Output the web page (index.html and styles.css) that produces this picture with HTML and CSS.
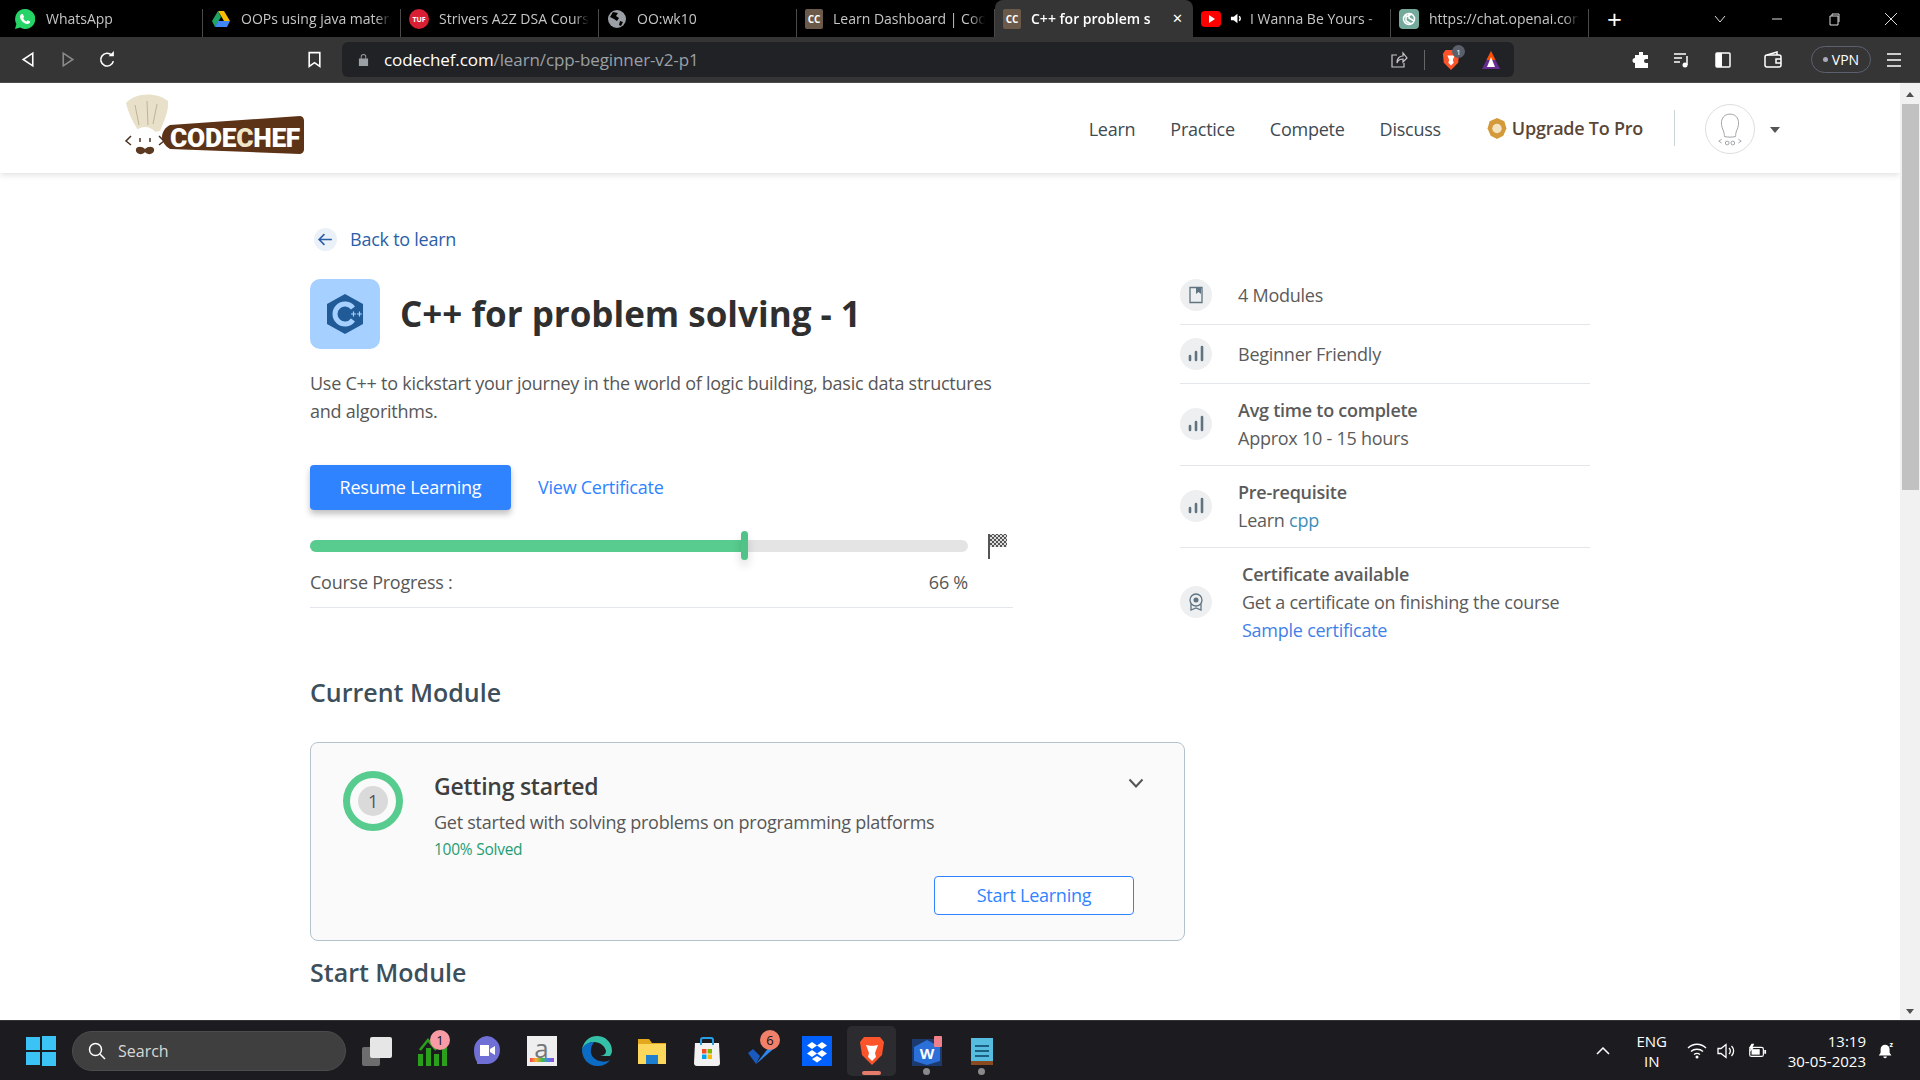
FILE: index.html
```html
<!DOCTYPE html>
<html lang="en">
<head>
    <meta charset="UTF-8">
    <title>C++ for problem solving - 1</title>
    <link rel="stylesheet" href="styles.css">
</head>
<body>
    <div class="tabstrip">
        <div class="tab tab-first">
            <svg class="favicon" viewBox="0 0 20 20"><path class="i-wa" d="M10 0a10 10 0 0 0-8.600 15L0 20l5.200-1.400A10 10 0 1 0 10 0z"/><path class="i-white" d="M7 5c-.8 0-2 1-2 2.800 0 3 3.800 7.200 7.400 7.200 1.600 0 2.800-1.200 2.800-2.400l-2.600-1.400-1.200 1.200c-1.200-.4-2.800-2-3.200-3.200l1-1.200L7.800 5z"/></svg>
            <span class="tab-title">WhatsApp</span>
        </div>
        <div class="tab">
            <svg class="favicon" viewBox="0 0 20 20"><path class="i-yellow" d="M7 2h6l6 10h-6z"/><path class="i-green" d="M7 2 1 12l3 6 6-10z"/><path class="i-blue" d="M4 18h12l3-6H7z"/></svg>
            <span class="tab-title">OOPs using java materi</span>
        </div>
        <div class="tab">
            <svg class="favicon" viewBox="0 0 20 20"><circle class="i-red" cx="10" cy="10" r="10"/><text class="tuf" x="10" y="12.500">TUF</text></svg>
            <span class="tab-title">Strivers A2Z DSA Cours</span>
        </div>
        <div class="tab">
            <svg class="favicon" viewBox="0 0 20 20"><circle class="i-grey" cx="10" cy="10" r="9"/><path class="i-black" d="M6 3 11 4 9 7 12 9 10 12 7 10 3 8zM13 12l3 1-2 4-2-1z"/></svg>
            <span class="tab-title">OO:wk10</span>
        </div>
        <div class="tab">
            <span class="cc-icon">CC</span>
            <span class="tab-title">Learn Dashboard | Cod</span>
        </div>
        <div class="tab tab-active">
            <span class="cc-icon">CC</span>
            <span class="tab-title">C++ for problem s</span>
            <span class="tab-close">✕</span>
        </div>
        <div class="tab">
            <svg class="favicon" viewBox="0 0 20 20"><rect class="i-red2" y="2" width="20" height="16" rx="4"/><path class="i-white" d="m8 6 6 4-6 4z"/></svg>
            <svg class="speaker" viewBox="0 0 14 14"><path class="i-white" d="M1 5h3l4-3v10l-4-3H1z"/><path class="stroke-white" d="M10 4.500a4 4 0 0 1 0 5"/></svg>
            <span class="tab-title">I Wanna Be Yours -</span>
        </div>
        <div class="tab">
            <svg class="favicon" viewBox="0 0 20 20"><rect class="i-gpt" width="20" height="20" rx="4"/><circle class="stroke-white" cx="10" cy="10" r="5.500"/><path class="stroke-white" d="M7 5v7l5 3M13 5l-6 3M15 12l-5-3V4"/></svg>
            <span class="tab-title">https://chat.openai.con</span>
        </div>
        <span class="new-tab">+</span>
        <div class="window-btns">
            <svg class="win-icon" viewBox="0 0 14 14"><path class="stroke-thin" d="m2 4 5 6 5-6"/></svg>
            <svg class="win-icon" viewBox="0 0 14 14"><path class="stroke-thin" d="M2 7h10"/></svg>
            <svg class="win-icon" viewBox="0 0 14 14"><path class="stroke-thin" d="M3 4h8v9H3zM5 4V2h7v8"/></svg>
            <svg class="win-icon" viewBox="0 0 14 14"><path class="stroke-thin" d="m1 1 12 12M13 1 1 13"/></svg>
        </div>
    </div>

    <div class="toolbar">
        <svg class="nav-icon nav-back" viewBox="0 0 16 16"><path class="stroke-white" d="M12 2v12L3 8z"/></svg>
        <svg class="nav-icon nav-fwd" viewBox="0 0 16 16"><path class="stroke-dim" d="M4 2v12l9-6z"/></svg>
        <svg class="nav-icon nav-reload" viewBox="0 0 16 16"><path class="stroke-white" d="M13.500 9.500A6 6 0 1 1 12 4"/><path class="i-white" d="M9 5h5V0z"/></svg>
        <svg class="nav-icon nav-mark" viewBox="0 0 16 16"><path class="stroke-white" d="M3 1.500h10v13l-5-3.500-5 3.500z"/></svg>
        <div class="address">
            <svg class="lock" viewBox="0 0 12 14"><path class="i-lock" d="M1 6h10v8H1zM3 6V4a3 3 0 0 1 6 0v2H8V4a2 2 0 0 0-4 0v2z"/></svg>
            <span class="url"><span class="url-host">codechef.com</span>/learn/cpp-beginner-v2-p1</span>
            <svg class="addr-share" viewBox="0 0 18 18"><path class="stroke-soft" d="M7 4H2v12h12v-4M7 12c0-5 3-7 6-7V2l4 5-4 4V8c-3 0-5 1-6 4z"/></svg>
            <span class="addr-sep"></span>
            <div class="brave-wrap">
                <svg class="brave-small" viewBox="0 0 20 24"><path class="i-brave" d="M4 1h12l3 4-1 10-8 8-8-8L1 5z"/><path class="i-white" d="M6 7h8l-2 5 1 3-3 3-3-3 1-3z"/></svg>
                <span class="brave-badge">1</span>
            </div>
            <svg class="rewards" viewBox="0 0 20 20"><path class="i-purple" d="M10 1 19 19H1z"/><path class="i-orange" d="M10 1 14.500 10 5.500 10z"/><path class="i-white" d="M10 7 14 17H6z"/></svg>
        </div>
        <div class="toolbar-right">
            <svg class="tool-icon" viewBox="0 0 18 18"><path class="i-white" d="M7 1h4v3h5v4h-2a2 2 0 0 0 0 4h2v5H3v-5a2 2 0 0 1 0-5V4h4z"/></svg>
            <svg class="tool-icon" viewBox="0 0 18 18"><path class="stroke-white" d="M1 3h12M1 7h8M1 11h6M14 5v9"/><circle class="i-white" cx="12" cy="14" r="2.500"/></svg>
            <svg class="tool-icon" viewBox="0 0 18 18"><rect class="stroke-white" x="2" y="2" width="14" height="14" rx="1"/><path class="i-white" d="M2 2h6v14H2z"/></svg>
            <svg class="tool-icon tool-wallet" viewBox="0 0 18 18"><rect class="stroke-white" x="1" y="4" width="16" height="12" rx="2"/><path class="stroke-white" d="M3 4 13 1v3M17 8h-5v4h5"/></svg>
            <span class="vpn"><span class="vpn-dot"></span>VPN</span>
            <svg class="tool-icon tool-menu" viewBox="0 0 18 18"><path class="stroke-white" d="M2 3h14M2 9h14M2 15h14"/></svg>
        </div>
    </div>

    <div class="viewport">
        <div class="page">
            <header class="site-header">
                <svg class="logo" viewBox="110 85 210 85">
                    <path class="logo-hat" d="M126 102c8-10 30-12 42-2 1 10-4 20-8 30-8 2-16 1-22-1-6-9-10-18-12-27z"/>
                    <path class="logo-fold" d="M135 104l4 20M147 100l1 24M157 103l-4 20"/>
                    <path class="logo-band" d="M170 124 300 115a5 5 0 0 1 4 5v29a5 5 0 0 1-4 4l-130-5c-5-3-8-8-8-12s3-10 8-12z"/>
                    <text class="logo-text" x="170" y="146" textLength="130" lengthAdjust="spacingAndGlyphs">CODE<tspan class="logo-c">C</tspan>HEF</text>
                    <circle class="logo-face" cx="145" cy="139" r="13" />
                    <path class="logo-stash" d="M145 148c-3-3-8-3-9 0-1 5 6 7 9 3 3 4 10 2 9-3-1-3-6-3-9 0z"/>
                    <path class="logo-arrow" d="m131 135-5 5 5 4M159 135l5 5-5 4"/>
                    <path class="logo-eye" d="M140 137v4M150 137v4"/>
                </svg>
                <nav class="main-nav">
                    <a class="nav-link">Learn</a>
                    <a class="nav-link">Practice</a>
                    <a class="nav-link">Compete</a>
                    <a class="nav-link">Discuss</a>
                    <a class="nav-pro">
                        <svg class="medal" viewBox="0 0 18 20"><path class="medal-outer" d="M9 0l7 3 2 7-3 7-6 3-6-3-3-7 2-7z"/><circle class="medal-inner" cx="9" cy="10" r="4.500"/></svg>
                        Upgrade To Pro
                    </a>
                    <span class="nav-sep"></span>
                    <span class="avatar">
                        <svg class="avatar-art" viewBox="0 0 30 36"><path class="stroke-avatar" d="M8 20C3 10 7 2 15 2s12 8 7 18c-1 3-1 5-1 6-4 1-8 1-12 0 0-1 0-3-1-6z"/><path class="stroke-avatar" d="m6 29-3 2 3 2M24 29l3 2-3 2"/><circle class="stroke-avatar" cx="12" cy="33" r="2"/><circle class="stroke-avatar" cx="18" cy="33" r="2"/></svg>
                    </span>
                    <span class="caret"></span>
                </nav>
            </header>

            <main class="content">
                <div class="course-top">
                    <section class="course-left">
                        <a class="back-link">
                            <span class="back-circle">
                                <svg class="back-arrow" viewBox="0 0 16 16"><path class="stroke-back" d="M14 8H2M7 3 2 8l5 5"/></svg>
                            </span>
                            Back to learn
                        </a>
                        <div class="course-head">
                            <span class="course-icon">
                                <svg class="cpp-logo" viewBox="0 0 36 40"><path class="cpp-hex" d="M18 0 36 10v20L18 40 0 30V10z"/><path class="cpp-c" d="M26 14a10 10 0 1 0 0 12" /><path class="cpp-plus" d="M24 20h5M26.500 17.500v5M30 20h5M32.500 17.500v5"/></svg>
                            </span>
                            <h1 class="course-title">C++ for problem solving - 1</h1>
                        </div>
                        <p class="course-desc">Use C++ to kickstart your journey in the world of logic building, basic data structures and algorithms.</p>
                        <div class="course-actions">
                            <a class="btn-primary">Resume Learning</a>
                            <a class="link-cert">View Certificate</a>
                        </div>
                        <div class="progress-row">
                            <div class="progress-track">
                                <div class="progress-fill" style="width: 66%"></div>
                                <span class="progress-knob" style="left: 66%"></span>
                            </div>
                            <svg class="flag" viewBox="0 0 20 26">
                                <defs><pattern id="checks" width="4" height="4" patternUnits="userSpaceOnUse"><rect class="check-bg" width="4" height="4"/><rect class="check-dark" width="2" height="2"/><rect class="check-dark" x="2" y="2" width="2" height="2"/></pattern></defs>
                                <path class="flag-pole" d="M1 1v25"/>
                                <rect x="2" y="1" width="17" height="13" fill="url(#checks)"/>
                            </svg>
                        </div>
                        <div class="progress-label">
                            <span>Course Progress :</span>
                            <span>66 %</span>
                        </div>
                    </section>

                    <aside class="course-info">
                        <div class="info-row">
                            <span class="info-icon"><svg class="info-svg" viewBox="0 0 18 18"><path class="stroke-info" d="M3 1.500h12v15H3z"/><path class="fill-info" d="M9 1.500h5V8l-2.500-2L9 8z"/></svg></span>
                            <div class="info-text">4 Modules</div>
                        </div>
                        <div class="info-row">
                            <span class="info-icon"><svg class="info-svg" viewBox="0 0 18 18"><path class="bars-info" d="M3 11v4M9 7v8M15 2v13"/></svg></span>
                            <div class="info-text">Beginner Friendly</div>
                        </div>
                        <div class="info-row info-row-tall">
                            <span class="info-icon"><svg class="info-svg" viewBox="0 0 18 18"><path class="bars-info" d="M3 11v4M9 7v8M15 2v13"/></svg></span>
                            <div class="info-text"><strong>Avg time to complete</strong><br>Approx 10 - 15 hours</div>
                        </div>
                        <div class="info-row info-row-tall">
                            <span class="info-icon"><svg class="info-svg" viewBox="0 0 18 18"><path class="bars-info" d="M3 11v4M9 7v8M15 2v13"/></svg></span>
                            <div class="info-text"><strong>Pre-requisite</strong><br>Learn <a class="link-cpp">cpp</a></div>
                        </div>
                        <div class="info-row info-row-cert">
                            <span class="info-icon"><svg class="info-svg" viewBox="0 0 18 18"><circle class="stroke-info" cx="9" cy="7" r="6"/><path class="stroke-info" d="M4 11v6l5-2 5 2v-6"/><circle class="fill-info" cx="9" cy="7" r="2.500"/></svg></span>
                            <div class="info-text"><strong>Certificate available</strong><br>Get a certificate on finishing the course<br><a class="link-sample">Sample certificate</a></div>
                        </div>
                    </aside>
                </div>

                <section class="modules">
                    <h2 class="section-title">Current Module</h2>
                    <div class="module-card">
                        <div class="module-head">
                            <span class="module-ring"><span class="module-num">1</span></span>
                            <div class="module-text">
                                <h3 class="module-title">Getting started</h3>
                                <p class="module-desc">Get started with solving problems on programming platforms</p>
                                <p class="module-solved">100% Solved</p>
                            </div>
                            <svg class="module-chevron" viewBox="0 0 16 10"><path class="stroke-chev" d="m1.500 1.500 6.500 7 6.500-7"/></svg>
                        </div>
                        <div class="module-foot"><a class="btn-outline">Start Learning</a></div>
                    </div>
                    <h2 class="section-title section-next">Start Module</h2>
                </section>
            </main>
        </div>
        <div class="scrollbar">
            <span class="scroll-up"></span>
            <span class="scroll-thumb"></span>
            <span class="scroll-down"></span>
        </div>
    </div>

    <footer class="taskbar">
        <svg class="start-icon" viewBox="0 0 30 30"><path class="i-win" d="M0 1h14v13H0zM16 0h14v14H16zM0 16h14v13H0zM16 16h14v14H16z"/></svg>
        <div class="search-box">
            <svg class="search-icon" viewBox="0 0 18 18"><circle class="stroke-white" cx="7.500" cy="7.500" r="6"/><path class="stroke-white" d="m12 12 5 5"/></svg>
            <span>Search</span>
        </div>
        <div class="task-icons">
            <span class="task-slot"><svg class="task-svg" viewBox="0 0 30 30"><rect class="i-w1" x="0" y="11" width="18" height="19" rx="2"/><rect class="i-w2" x="8" y="1" width="22" height="21" rx="2"/></svg></span>
            <span class="task-slot"><svg class="task-svg" viewBox="0 0 30 30"><path class="i-chart" d="M1 18h5v12H1zM9 12h5v18H9zM17 18h5v12h-5zM25 10h5v20h-5z"/><path class="stroke-chart" d="m3 14 8-10 8 10"/></svg><span class="task-badge badge-pink">1</span></span>
            <span class="task-slot"><svg class="task-svg" viewBox="0 0 30 30"><path class="i-teams" d="M15 0a14 14 0 0 1 13 14c0 8-6 14-13 14H5v-2c-2-3-3-7-3-12A14 14 0 0 1 15 0z"/><path class="i-white" d="M8 9h9v11H8zM18 13l5-3v9l-5-3z"/></svg></span>
            <span class="task-slot"><span class="amazon-tile">a<span class="amazon-dots"></span></span></span>
            <span class="task-slot"><svg class="task-svg" viewBox="0 0 30 30"><path class="i-edge1" d="M15 0C7 0 1 6 0 14c2-5 7-8 12-8 6 0 11 4 12 9 0 4-4 5-7 5h11c1-2 2-3 2-5C30 6 23 0 15 0z"/><path class="i-edge2" d="M0 14c0 9 7 16 15 16 6 0 10-2 13-6-3 2-7 2-10 1-6-1-10-6-9-12 0-3 2-5 3-7C6 6 1 9 0 14z"/></svg></span>
            <span class="task-slot"><svg class="task-svg" viewBox="0 0 30 30"><path class="i-folder1" d="M1 3h11l3 4h14v6H1z"/><path class="i-folder2" d="M1 8h28v20H1z"/><path class="i-blue2" d="M9 19h12v9H9z"/></svg></span>
            <span class="task-slot"><svg class="task-svg" viewBox="0 0 30 30"><path class="i-store" d="M3 7h24l1 20a3 3 0 0 1-3 3H5a3 3 0 0 1-3-3z"/><path class="stroke-store" d="M9 9V4a2 2 0 0 1 2-2h8a2 2 0 0 1 2 2v5"/><path class="i-ms1" d="M10 13h4.500v4.500H10z"/><path class="i-ms2" d="M15.500 13H20v4.500h-4.500z"/><path class="i-ms3" d="M10 18.500h4.500V23H10z"/><path class="i-ms4" d="M15.500 18.500H20V23h-4.500z"/></svg></span>
            <span class="task-slot"><svg class="task-svg" viewBox="0 0 30 30"><path class="i-todo1" d="m1 17 5-4 7 7-4 8z"/><path class="i-todo2" d="m9 28 17-22 4 4-21 18z"/></svg><span class="task-badge badge-orange">6</span></span>
            <span class="task-slot"><svg class="task-svg" viewBox="0 0 30 30"><rect class="i-drop" width="30" height="30"/><path class="i-white" d="m10 6 5 3.500-5 3.500-5-3.500zM20 6l5 3.500-5 3.500-5-3.500zM10 14l5 3.500-5 3.500-5-3.500zM20 14l5 3.500-5 3.500-5-3.500zM15 20l5 3-5 3.500-5-3.500z"/></svg></span>
            <span class="task-slot task-active"><svg class="task-svg" viewBox="0 0 30 30"><path class="i-brave" d="M7 1h16l4 5-2 13-10 10L5 19 3 6z"/><path class="i-white" d="M9 9c3 1 9 1 12 0l-3 8 1 4-4 4-4-4 1-4z"/></svg><span class="task-bar"></span></span>
            <span class="task-slot"><svg class="task-svg" viewBox="0 0 30 30"><rect class="i-word-bg" y="3" width="30" height="27"/><path class="i-word" d="M2 11 15 4l13 7v14l-13 4-13-4z"/><text class="word-w" x="15" y="23">W</text><rect class="i-pink" x="22" y="0" width="8" height="11" rx="1"/></svg><span class="task-dot"></span></span>
            <span class="task-slot"><svg class="task-svg" viewBox="0 0 30 30"><rect class="i-note" x="4" y="2" width="22" height="26"/><path class="stroke-note" d="M8 10h14M8 15h14M8 20h14"/><path class="i-brown" d="M4 25h22v4H4z"/></svg><span class="task-dot"></span></span>
        </div>
        <div class="tray">
            <svg class="tray-chev" viewBox="0 0 14 8"><path class="stroke-white" d="m1 7 6-6 6 6"/></svg>
            <div class="tray-lang">ENG<br>IN</div>
            <svg class="tray-icon" viewBox="0 0 20 16"><path class="stroke-tray" d="M1 5c5-5 13-5 18 0M4 8.500c3-3 9-3 12 0M7 11.500c2-1.500 4-1.500 6 0"/><circle class="i-white" cx="10" cy="14" r="1.500"/></svg>
            <svg class="tray-icon" viewBox="0 0 20 16"><path class="stroke-tray" d="M1 5.500h3l5-4v13l-5-4H1zM12 5a4 4 0 0 1 0 6M14.500 3a7 7 0 0 1 0 10"/></svg>
            <svg class="tray-icon" viewBox="0 0 22 16"><rect class="stroke-tray" x="3" y="4" width="15" height="10" rx="2"/><rect class="i-white" x="5" y="6" width="9" height="6"/><path class="i-white" d="M19 7h2v4h-2zM5 0 2 5h2L3 9l5-5H6l2-4z"/></svg>
            <div class="tray-clock">13:19<br>30-05-2023</div>
            <svg class="tray-bell" viewBox="0 0 20 20"><path class="i-white" d="M9 3a5 5 0 0 1 5 5v4l2 3H2l2-3V8a5 5 0 0 1 5-5zM7 16h4a2 2 0 0 1-4 0z"/><text class="bell-z" x="14" y="6">z</text></svg>
        </div>
    </footer>
</body>
</html>
```

FILE: styles.css
```css
* {
    margin: 0;
    padding: 0;
    box-sizing: border-box;
}

body {
    height: 100vh;
    display: flex;
    flex-direction: column;
    overflow: hidden;
    background: #fff;
    font-family: 'Open Sans', sans-serif;
    color: #4d4d4d;
}

a {
    text-decoration: none;
}

/* browser tabs */
.tabstrip {
    height: 37px;
    background: #000;
    display: flex;
    align-items: center;
    padding-left: 5px;
    flex: none;
}

.tab {
    width: 198px;
    height: 37px;
    display: flex;
    align-items: center;
    gap: 10px;
    padding: 0 10px 0 8px;
    color: #c4c7c5;
    font-size: 14px;
    position: relative;
    white-space: nowrap;
    overflow: hidden;
}

.tab-first {
    padding-left: 10px;
    gap: 11px;
}

.tab:not(.tab-active)::after {
    content: "";
    position: absolute;
    right: 0;
    top: 9px;
    bottom: 0;
    width: 1px;
    background: #4a4a4a;
}

.tab-active {
    background: #353535;
    color: #fff;
    border-radius: 8px 8px 0 0;
    font-weight: 600;
}

.tab-title {
    overflow: hidden;
    flex: 1;
    -webkit-mask-image: linear-gradient(90deg, #000 90%, transparent);
    mask-image: linear-gradient(90deg, #000 90%, transparent);
}

.tab-close {
    font-size: 13px;
    color: #fff;
    font-family: 'DejaVu Sans', sans-serif;
}

.favicon {
    width: 20px;
    height: 20px;
    flex: none;
}

.speaker {
    width: 13px;
    height: 13px;
    flex: none;
    margin-left: -1px;
    margin-right: -3px;
}

.cc-icon {
    width: 18px;
    height: 20px;
    flex: none;
    background: #6b5a4a;
    color: #fff;
    font-size: 10px;
    font-weight: 700;
    display: flex;
    align-items: center;
    justify-content: center;
    border-radius: 2px;
}

.tuf {
    fill: #fff;
    font-size: 7px;
    font-weight: 700;
    text-anchor: middle;
}

.new-tab {
    color: #fff;
    font-size: 26px;
    font-weight: 400;
    margin-left: 18px;
    line-height: 1;
}

.window-btns {
    margin-left: auto;
    display: flex;
    gap: 43px;
    padding-right: 22px;
}

.win-icon {
    width: 14px;
    height: 14px;
}

/* shared svg paints */
.stroke-thin { fill: none; stroke: #ddd; stroke-width: 1; }
.stroke-white { fill: none; stroke: #fff; stroke-width: 1.500; }
.stroke-dim { fill: none; stroke: #8a8a8a; stroke-width: 1.500; }
.stroke-soft { fill: none; stroke: #c8c8c8; stroke-width: 1.200; }
.stroke-tray { fill: none; stroke: #fff; stroke-width: 1.300; }
.i-white { fill: #fff; }
.i-black { fill: #000; }
.i-wa { fill: #25d366; }
.i-yellow { fill: #fbbc04; }
.i-green { fill: #1fa463; }
.i-blue { fill: #4285f4; }
.i-red { fill: #d81f33; }
.i-red2 { fill: #f00; }
.i-grey { fill: #9aa0a6; }
.i-gpt { fill: #74aa9c; }
.i-lock { fill: #9aa0a6; }
.i-brave { fill: #fb542b; }
.i-purple { fill: #662d91; }
.i-orange { fill: #ff5000; }

/* address bar row */
.toolbar {
    height: 46px;
    flex: none;
    background: #353535;
    display: flex;
    align-items: center;
    padding-left: 20px;
    border-bottom: 1px solid #4a4a4a;
}

.nav-icon {
    width: 17px;
    height: 17px;
    flex: none;
}

.nav-fwd {
    margin-left: 22px;
}

.nav-reload {
    margin-left: 23px;
}

.nav-mark {
    margin-left: 190px;
}

.address {
    width: 1172px;
    height: 35px;
    margin-left: 19px;
    background: #212225;
    border-radius: 6px;
    display: flex;
    align-items: center;
    padding-left: 16px;
}

.lock {
    width: 11px;
    height: 13px;
    flex: none;
}

.url {
    margin-left: 15px;
    font-size: 17px;
    letter-spacing: -0.1px;
    color: #9aa0a6;
    flex: 1;
}

.url-host {
    color: #fff;
}

.addr-share {
    width: 18px;
    height: 18px;
}

.addr-sep {
    width: 1px;
    height: 20px;
    background: #666;
    margin: 0 17px 0 16px;
}

.brave-wrap {
    position: relative;
    display: flex;
}

.brave-small {
    width: 18px;
    height: 22px;
}

.brave-badge {
    position: absolute;
    left: 10px;
    top: -4px;
    width: 13px;
    height: 13px;
    border-radius: 50%;
    background: #5b5f6b;
    color: #fff;
    font-size: 8px;
    text-align: center;
    line-height: 13px;
}

.rewards {
    width: 20px;
    height: 20px;
    margin: 0 13px 0 21px;
}

.toolbar-right {
    display: flex;
    align-items: center;
    margin-left: 118px;
    gap: 23px;
}

.tool-icon {
    width: 18px;
    height: 18px;
}

.tool-wallet {
    margin-left: 9px;
}

.tool-menu {
    margin-left: -9px;
}

.vpn {
    width: 60px;
    height: 27px;
    margin-left: 6px;
    border: 1px solid #5c6170;
    border-radius: 14px;
    color: #fff;
    font-size: 14px;
    display: flex;
    align-items: center;
    justify-content: center;
    gap: 4px;
}

.vpn-dot {
    width: 5px;
    height: 5px;
    border-radius: 50%;
    background: #aab;
}

/* page area */
.viewport {
    flex: 1;
    min-height: 0;
    display: flex;
}

.page {
    flex: 1;
    min-width: 0;
    overflow: hidden;
    letter-spacing: -0.25px;
}

.scrollbar {
    width: 20px;
    background: #f1f1f1;
    display: flex;
    flex-direction: column;
    align-items: center;
    padding-top: 9px;
}

.scroll-up {
    border: 4px solid transparent;
    border-top: 0;
    border-bottom: 5px solid #505050;
}

.scroll-thumb {
    width: 17px;
    height: 386px;
    margin-top: 7px;
    background: #c1c1c1;
}

.scroll-down {
    margin-top: auto;
    margin-bottom: 6px;
    border: 4px solid transparent;
    border-bottom: 0;
    border-top: 5px solid #505050;
}

.site-header {
    height: 90px;
    background: #fff;
    box-shadow: 0 2px 6px rgba(0, 0, 0, 0.12);
    display: flex;
    align-items: center;
    justify-content: space-between;
    padding-left: 110px;
    padding-right: 120px;
    position: relative;
}

.logo {
    width: 210px;
    height: 85px;
}

.logo-hat { fill: #e8e0c8; }
.logo-fold { fill: none; stroke: #bdb498; stroke-width: 1; }
.logo-band { fill: #5c3317; }
.logo-text { fill: #fff; font-family: 'Roboto', sans-serif; font-size: 25px; font-weight: 900; }
.logo-c { fill: #f1e7c8; }
.logo-face { fill: #fff; }
.logo-stash { fill: #5c3a21; }
.logo-arrow { fill: none; stroke: #4a3020; stroke-width: 1.500; }
.logo-eye { fill: none; stroke: #4a3020; stroke-width: 1.500; }

.main-nav {
    display: flex;
    align-items: center;
    font-size: 18px;
}

.nav-link {
    color: #3e4a52;
    margin-right: 35px;
    padding-top: 2px;
}

.nav-pro {
    display: flex;
    align-items: center;
    gap: 5px;
    margin-left: 11px;
    color: #5a4636;
    font-weight: 600;
}

.medal {
    width: 20px;
    height: 21px;
}

.medal-outer { fill: #d49a3a; }
.medal-inner { fill: #f3e3c0; }

.nav-sep {
    width: 1px;
    height: 36px;
    background: #c9d3d8;
    margin: 0 30px 0 31px;
}

.avatar {
    width: 50px;
    height: 50px;
    margin-top: 2px;
    border: 1px solid #dedede;
    border-radius: 50%;
    display: flex;
    align-items: center;
    justify-content: center;
}

.avatar-art {
    width: 28px;
    height: 36px;
}

.stroke-avatar { fill: none; stroke: #9aa0a3; stroke-width: 1; }

.caret {
    margin-left: 15px;
    margin-top: 3px;
    border: 5px solid transparent;
    border-bottom: 0;
    border-top: 6px solid #555;
}

/* course content */
.content {
    padding: 54px 0 0 310px;
}

.course-top {
    display: flex;
    gap: 167px;
}

.course-left {
    width: 703px;
}

.back-link {
    display: flex;
    align-items: center;
    height: 24px;
    font-size: 18px;
    color: #2c5fa8;
}

.back-circle {
    width: 23px;
    height: 23px;
    border-radius: 50%;
    background: #eaf1f8;
    margin-left: 4px;
    margin-right: 13px;
    display: flex;
    align-items: center;
    justify-content: center;
}

.back-arrow {
    width: 17px;
    height: 17px;
}

.stroke-back { fill: none; stroke: #2c5fa8; stroke-width: 1.500; }

.course-head {
    display: flex;
    align-items: center;
    gap: 20px;
    margin-top: 28px;
}

.course-icon {
    width: 70px;
    height: 70px;
    border-radius: 10px;
    background: #a6d0ff;
    display: flex;
    align-items: center;
    justify-content: center;
}

.cpp-logo {
    width: 36px;
    height: 40px;
}

.cpp-hex { fill: #215b97; }
.cpp-c { fill: none; stroke: #a6d0ff; stroke-width: 5; }
.cpp-plus { fill: none; stroke: #a6d0ff; stroke-width: 1.200; }

.course-title {
    font-size: 35px;
    font-weight: 700;
    color: #2f2f2f;
    letter-spacing: 0;
    padding-bottom: 2px;
}

.course-desc {
    margin-top: 20px;
    width: 703px;
    font-size: 18px;
    line-height: 28px;
    color: #575757;
}

.course-actions {
    margin-top: 40px;
    display: flex;
    align-items: center;
    gap: 27px;
}

.btn-primary {
    width: 201px;
    height: 45px;
    padding-bottom: 2px;
    background: #3083ff;
    color: #fff;
    border-radius: 4px;
    font-size: 18px;
    display: flex;
    align-items: center;
    justify-content: center;
    box-shadow: 0 4px 6px rgba(0, 0, 0, 0.25);
}

.link-cert {
    font-size: 18px;
    color: #3083ff;
    padding-bottom: 2px;
}

.progress-row {
    margin-top: 30px;
    display: flex;
    align-items: center;
    height: 12px;
}

.progress-track {
    width: 658px;
    height: 12px;
    background: #e4e4e4;
    border-radius: 6px;
    position: relative;
}

.progress-fill {
    height: 12px;
    background: #58cc8f;
    border-radius: 6px 0 0 6px;
}

.progress-knob {
    position: absolute;
    top: -9px;
    width: 7px;
    height: 29px;
    margin-left: -3px;
    border-radius: 4px;
    background: #50c488;
    box-shadow: 0 6px 10px rgba(0, 0, 0, 0.15);
}

.flag {
    width: 20px;
    height: 26px;
    margin-left: 20px;
}

.flag-pole { fill: none; stroke: #555; stroke-width: 2; }
.check-bg { fill: #ddd; }
.check-dark { fill: #555; }

.progress-label {
    margin-top: 18px;
    width: 658px;
    display: flex;
    justify-content: space-between;
    font-size: 18px;
    line-height: 24px;
    color: #575757;
}

.course-left::after {
    content: "";
    display: block;
    margin-top: 13px;
    height: 1px;
    background: #e3e6ec;
}

.course-info {
    width: 410px;
    margin-top: 39px;
}

.info-row {
    display: flex;
    align-items: center;
    gap: 26px;
    height: 59px;
    border-bottom: 1px solid #e3e6ec;
}

.info-row-tall {
    height: 82px;
    padding-bottom: 2px;
}

.info-row-cert {
    height: auto;
    gap: 30px;
    padding: 12px 0;
    border-bottom: 0;
}

.info-icon {
    width: 32px;
    height: 32px;
    flex: none;
    border-radius: 50%;
    background: #eeeff0;
    display: flex;
    align-items: center;
    justify-content: center;
}

.info-svg {
    width: 18px;
    height: 18px;
}

.stroke-info { fill: none; stroke: #5f7480; stroke-width: 1.300; }
.fill-info { fill: #5f7480; }
.bars-info { fill: none; stroke: #5f7480; stroke-width: 2.600; stroke-linecap: round; }

.info-text {
    font-size: 18px;
    line-height: 28px;
    color: #5b5b5b;
}

.info-text strong {
    font-weight: 600;
}

.link-cpp {
    color: #3d8fb8;
}

.link-sample {
    color: #3f7fe8;
}

/* modules */
.modules {
    width: 875px;
    margin-top: 20px;
}

.section-title {
    font-size: 25px;
    line-height: 32px;
    font-weight: 600;
    color: #3d4f5a;
    letter-spacing: 0;
}

.section-next {
    margin-top: 15px;
}

.module-card {
    margin-top: 34px;
    height: 199px;
    border: 1px solid #b3c3cc;
    border-radius: 8px;
    background: #fafafa;
    padding: 28px 40px 0 32px;
}

.module-head {
    display: flex;
    align-items: flex-start;
}

.module-ring {
    width: 60px;
    height: 60px;
    flex: none;
    border: 7px solid #58cc8f;
    border-radius: 50%;
    display: flex;
    align-items: center;
    justify-content: center;
}

.module-num {
    width: 30px;
    height: 30px;
    border-radius: 50%;
    background: #dadada;
    color: #555;
    font-size: 18px;
    line-height: 30px;
    text-align: center;
}

.module-text {
    flex: 1;
    margin-left: 31px;
    margin-top: -1px;
}

.module-title {
    font-size: 23px;
    line-height: 32px;
    font-weight: 600;
    color: #3f3f3f;
}

.module-desc {
    margin-top: 6px;
    font-size: 18px;
    line-height: 28px;
    color: #575757;
}

.module-solved {
    margin-top: 2px;
    font-size: 15.500px;
    line-height: 22px;
    color: #1f9d72;
}

.module-chevron {
    width: 16px;
    height: 10px;
    margin-top: 7px;
}

.stroke-chev { fill: none; stroke: #555; stroke-width: 2; }

.module-foot {
    display: flex;
    justify-content: flex-end;
    margin-top: 16px;
    padding-right: 10px;
}

.btn-outline {
    width: 200px;
    height: 39px;
    padding-bottom: 1px;
    border: 1px solid #3083ff;
    border-radius: 4px;
    background: #fff;
    color: #3083ff;
    font-size: 18px;
    display: flex;
    align-items: center;
    justify-content: center;
}

/* windows taskbar */
.taskbar {
    height: 60px;
    flex: none;
    background: #1c1c20;
    border-top: 1px solid #333;
    display: flex;
    align-items: center;
    padding-left: 26px;
}

.start-icon {
    width: 30px;
    height: 30px;
}

.i-win { fill: #3cc3f5; }

.search-box {
    width: 274px;
    height: 40px;
    margin-left: 16px;
    border-radius: 20px;
    background: #3f3f3f;
    border: 1px solid #4c4c4c;
    display: flex;
    align-items: center;
    gap: 12px;
    padding-left: 15px;
    color: #d8d8d8;
    font-size: 16px;
}

.search-icon {
    width: 18px;
    height: 18px;
}

.task-icons {
    display: flex;
    margin-left: 3px;
}

.task-slot {
    width: 55px;
    height: 50px;
    display: flex;
    align-items: center;
    justify-content: center;
    position: relative;
}

.task-svg {
    width: 30px;
    height: 30px;
}

.task-active {
    background: #2c2c30;
    border-radius: 5px;
    width: 49px;
    margin: 0 3px;
}

.task-badge {
    position: absolute;
    top: 4px;
    right: 9px;
    width: 20px;
    height: 20px;
    border-radius: 50%;
    color: #111;
    font-size: 13px;
    text-align: center;
    line-height: 20px;
}

.badge-pink { background: #f99ba4; }
.badge-orange { background: #f0806a; }

.task-bar {
    position: absolute;
    bottom: 1px;
    left: 15px;
    width: 19px;
    height: 4px;
    border-radius: 2px;
    background: #e57b6a;
}

.task-dot {
    position: absolute;
    bottom: 1px;
    left: 24px;
    width: 7px;
    height: 7px;
    border-radius: 50%;
    background: #8a8a8a;
}

.amazon-tile {
    width: 30px;
    height: 30px;
    background: #efefef;
    color: #777;
    font-size: 26px;
    line-height: 24px;
    text-align: center;
    position: relative;
}

.amazon-dots {
    position: absolute;
    left: 3px;
    right: 3px;
    bottom: 4px;
    height: 4px;
    background: linear-gradient(90deg, #e44, #fa3, #4b4, #48e, #a4c);
}

.i-w1 { fill: #6d6d6d; }
.i-w2 { fill: #e6e6e6; }
.i-chart { fill: #2ca01c; }
.stroke-chart { fill: none; stroke: #2ca01c; stroke-width: 2.500; }
.i-teams { fill: #6f6fd6; }
.i-edge1 { fill: #35c1a8; }
.i-edge2 { fill: #0c6cc4; }
.i-folder1 { fill: #e3a81b; }
.i-folder2 { fill: #fbd75b; }
.i-blue2 { fill: #1c7fd0; }
.i-store { fill: #f2f2f2; }
.stroke-store { fill: none; stroke: #27a0e8; stroke-width: 2; }
.i-ms1 { fill: #f25022; }
.i-ms2 { fill: #7fba00; }
.i-ms3 { fill: #00a4ef; }
.i-ms4 { fill: #ffb900; }
.i-todo1 { fill: #185abd; }
.i-todo2 { fill: #2b88f0; }
.i-drop { fill: #0061ff; }
.i-word-bg { fill: #1d3a6e; }
.i-word { fill: #2b6fd8; }
.i-pink { fill: #f0808a; }
.word-w { fill: #fff; font-size: 15px; font-weight: 700; text-anchor: middle; }
.i-note { fill: #56bde0; }
.stroke-note { fill: none; stroke: #1c5f80; stroke-width: 2; }
.i-brown { fill: #8a4b20; }

.tray {
    margin-left: auto;
    display: flex;
    align-items: center;
    color: #fff;
    font-size: 15px;
    line-height: 20px;
    padding-right: 25px;
}

.tray-chev {
    width: 14px;
    height: 8px;
}

.tray-lang {
    margin-left: 22px;
    width: 40px;
    text-align: center;
}

.tray-icon {
    width: 20px;
    height: 16px;
    margin-left: 10px;
}

.tray-lang + .tray-icon {
    margin-left: 15px;
}

.tray-clock {
    margin-left: 21px;
    text-align: right;
}

.tray-bell {
    width: 18px;
    height: 20px;
    margin-left: 11px;
}

.bell-z {
    fill: #fff;
    font-size: 8px;
    font-weight: 700;
}
```
